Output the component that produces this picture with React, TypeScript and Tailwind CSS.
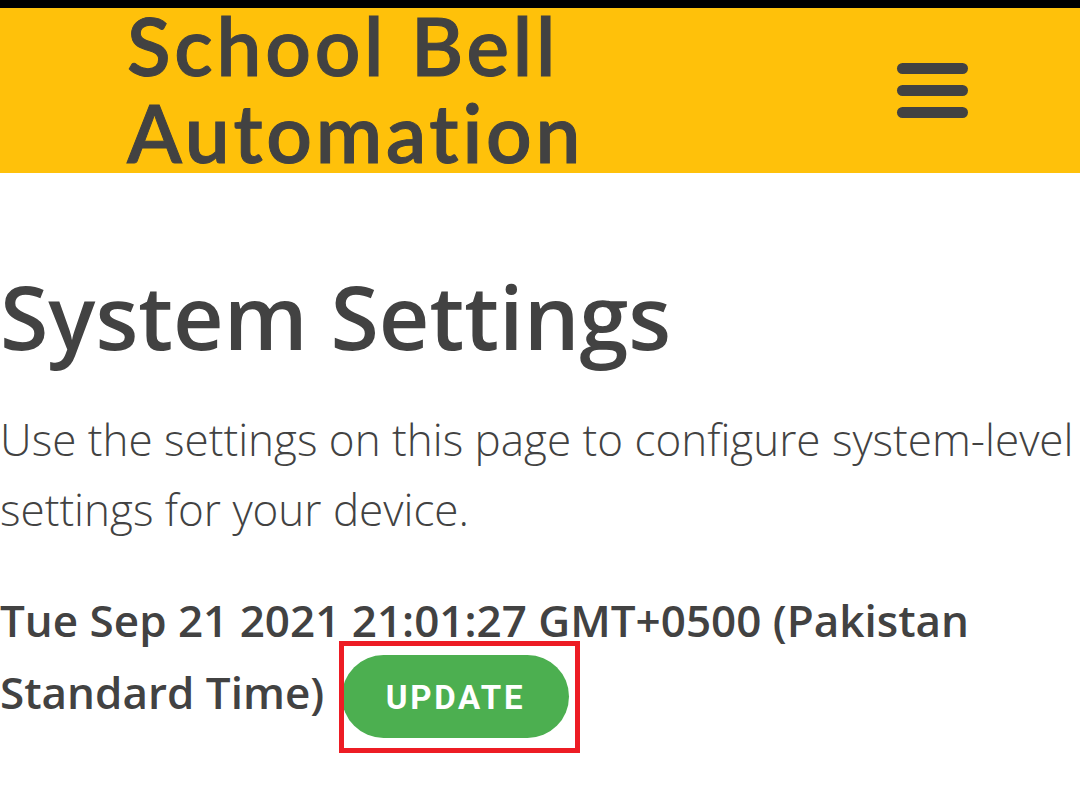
import React from 'react';

export default function App() {
  return (
    <div className="h-[793px] w-[1080px] overflow-hidden bg-white font-['Open_Sans',sans-serif] text-[#424242]">
      <div className="h-2 bg-black" />
      <header className="flex h-[165px] items-center justify-between bg-[#ffc10a] pr-[112px] pl-[127px]">
        <div className="-mt-[4px] w-[560px] font-['Lato',sans-serif] text-[80px] leading-[87px] font-semibold tracking-[3.8px] whitespace-nowrap [-webkit-text-stroke:1px_#424242] [font-variant-ligatures:none]">
          <div>School Bell</div>
          <div>Automation</div>
        </div>
        <button aria-label="Menu" className="flex flex-col gap-[11px]">
          <span className="h-[11px] w-[71px] rounded-full bg-[#424242]" />
          <span className="h-[11px] w-[71px] rounded-full bg-[#424242]" />
          <span className="h-[11px] w-[71px] rounded-full bg-[#424242]" />
        </button>
      </header>
      <main className="whitespace-nowrap">
        <h1 className="pt-[88px] text-[88px] leading-[110px] font-semibold tracking-[-0.02px]">System Settings</h1>
        <p className="pt-[33px] text-[44px] leading-[70px] font-light">
          Use the settings on this page to configure system-level<br />settings for your device.
        </p>
        <div className="pt-[40px] text-[44px] leading-[72px] font-semibold">
          <div>Tue Sep 21 2021 21:01:27 GMT+0500 (Pakistan</div>
          <div className="flex">
            <span className="w-[339px]">Standard Time)</span>
            <div className="-mt-[15px] flex h-[112px] w-[241px] items-start overflow-hidden border-[5px] border-[#ed1c24] pt-[9px]">
              <button className="-ml-[2px] h-[83px] w-[227px] shrink-0 rounded-full bg-[#4caf50] pt-[2px] font-['Roboto',sans-serif] text-[33px] leading-[81px] font-bold tracking-[2.7px] text-white">UPDATE</button>
            </div>
          </div>
        </div>
      </main>
    </div>
  );
}
